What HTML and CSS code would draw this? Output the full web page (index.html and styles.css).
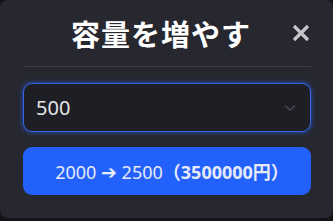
FILE: index.html
```html
<!DOCTYPE html>
<html lang="ja">
<head>
    <meta charset="UTF-8">
    <meta name="viewport" content="width=device-width, initial-scale=1.0">
    <title>容量を増やす</title>
    <link rel="stylesheet" href="styles.css">
</head>
<body>
<div class="modal">
    <!-- Header -->
    <div class="modal-header">
        <h2 class="modal-title">容量を増やす</h2>
        <button class="close-btn" aria-label="close">
            <svg width="18" height="18" viewBox="0 0 18 18">
                <path d="M2 2 L16 16 M16 2 L2 16" stroke="#c6c6ca" stroke-width="3.2" stroke-linecap="butt"/>
            </svg>
        </button>
    </div>

    <!-- Amount picker -->
    <div class="select-wrap">
        <select class="amount-select">
            <option>500</option>
            <option>1000</option>
            <option>2000</option>
        </select>
        <svg class="chevron" width="12" height="8" viewBox="0 0 12 8">
            <path d="M1 1.5 L6 6 L11 1.5" fill="none" stroke="#4b4c55" stroke-width="1.4"/>
        </svg>
    </div>

    <button class="buy-btn">2000 <b class="arrow">➔</b> 2500<b>（3500000円）</b></button>
</div>
</body>
</html>
```

FILE: styles.css
```css
html, body {
    height: 100%;
    margin: 0;
    overflow: hidden;
}

body {
    background-color: #141418;
    font-family: "Noto Sans", "Noto Sans CJK JP", sans-serif;
}

.modal {
    box-sizing: border-box;
    height: 218px;
    padding: 0 22px 0 23px;
    background-color: #27282f;
    border-radius: 8px;
}

/* Header */
.modal-header {
    display: flex;
    align-items: center;
    height: 66px;
    border-bottom: 1px solid #3e3f48;
}

.modal-title {
    flex: 1;
    margin: 0 0 0 8px;
    text-align: center;
    color: #ffffff;
    font-family: "Noto Sans CJK JP", sans-serif;
    font-size: 29px;
    font-weight: 700;
    letter-spacing: 1px;
    line-height: 1;
}

.close-btn {
    width: 20px;
    height: 20px;
    padding: 0;
    border: none;
    background: none;
    display: flex;
    align-items: center;
    justify-content: center;
    cursor: pointer;
}

/* Select */
.select-wrap {
    position: relative;
    margin-top: 16px;
}

.amount-select {
    display: block;
    width: 100%;
    height: 49px;
    box-sizing: border-box;
    padding: 0 12px;
    appearance: none;
    -webkit-appearance: none;
    background-color: #1e1f24;
    color: #e4e4e6;
    border: 1px solid #3366e8;
    border-radius: 9px;
    box-shadow: 0 0 4px 1px rgba(40, 95, 240, 0.55);
    font-family: "Noto Sans", sans-serif;
    font-size: 20px;
    outline: none;
}

.chevron {
    position: absolute;
    right: 15px;
    top: 21px;
}

/* Buy button */
.buy-btn {
    display: block;
    width: 100%;
    height: 48px;
    margin-top: 15px;
    padding: 0 0 0 10px;
    border: none;
    border-radius: 9px;
    background-color: #2361fc;
    color: #e6eaf6;
    font-family: "Noto Sans", "Noto Sans CJK JP", sans-serif;
    font-size: 18px;
    cursor: pointer;
}

.buy-btn b {
    font-weight: 700;
}

.arrow {
    font-family: "DejaVu Sans", sans-serif;
    font-size: 19px;
}
```
